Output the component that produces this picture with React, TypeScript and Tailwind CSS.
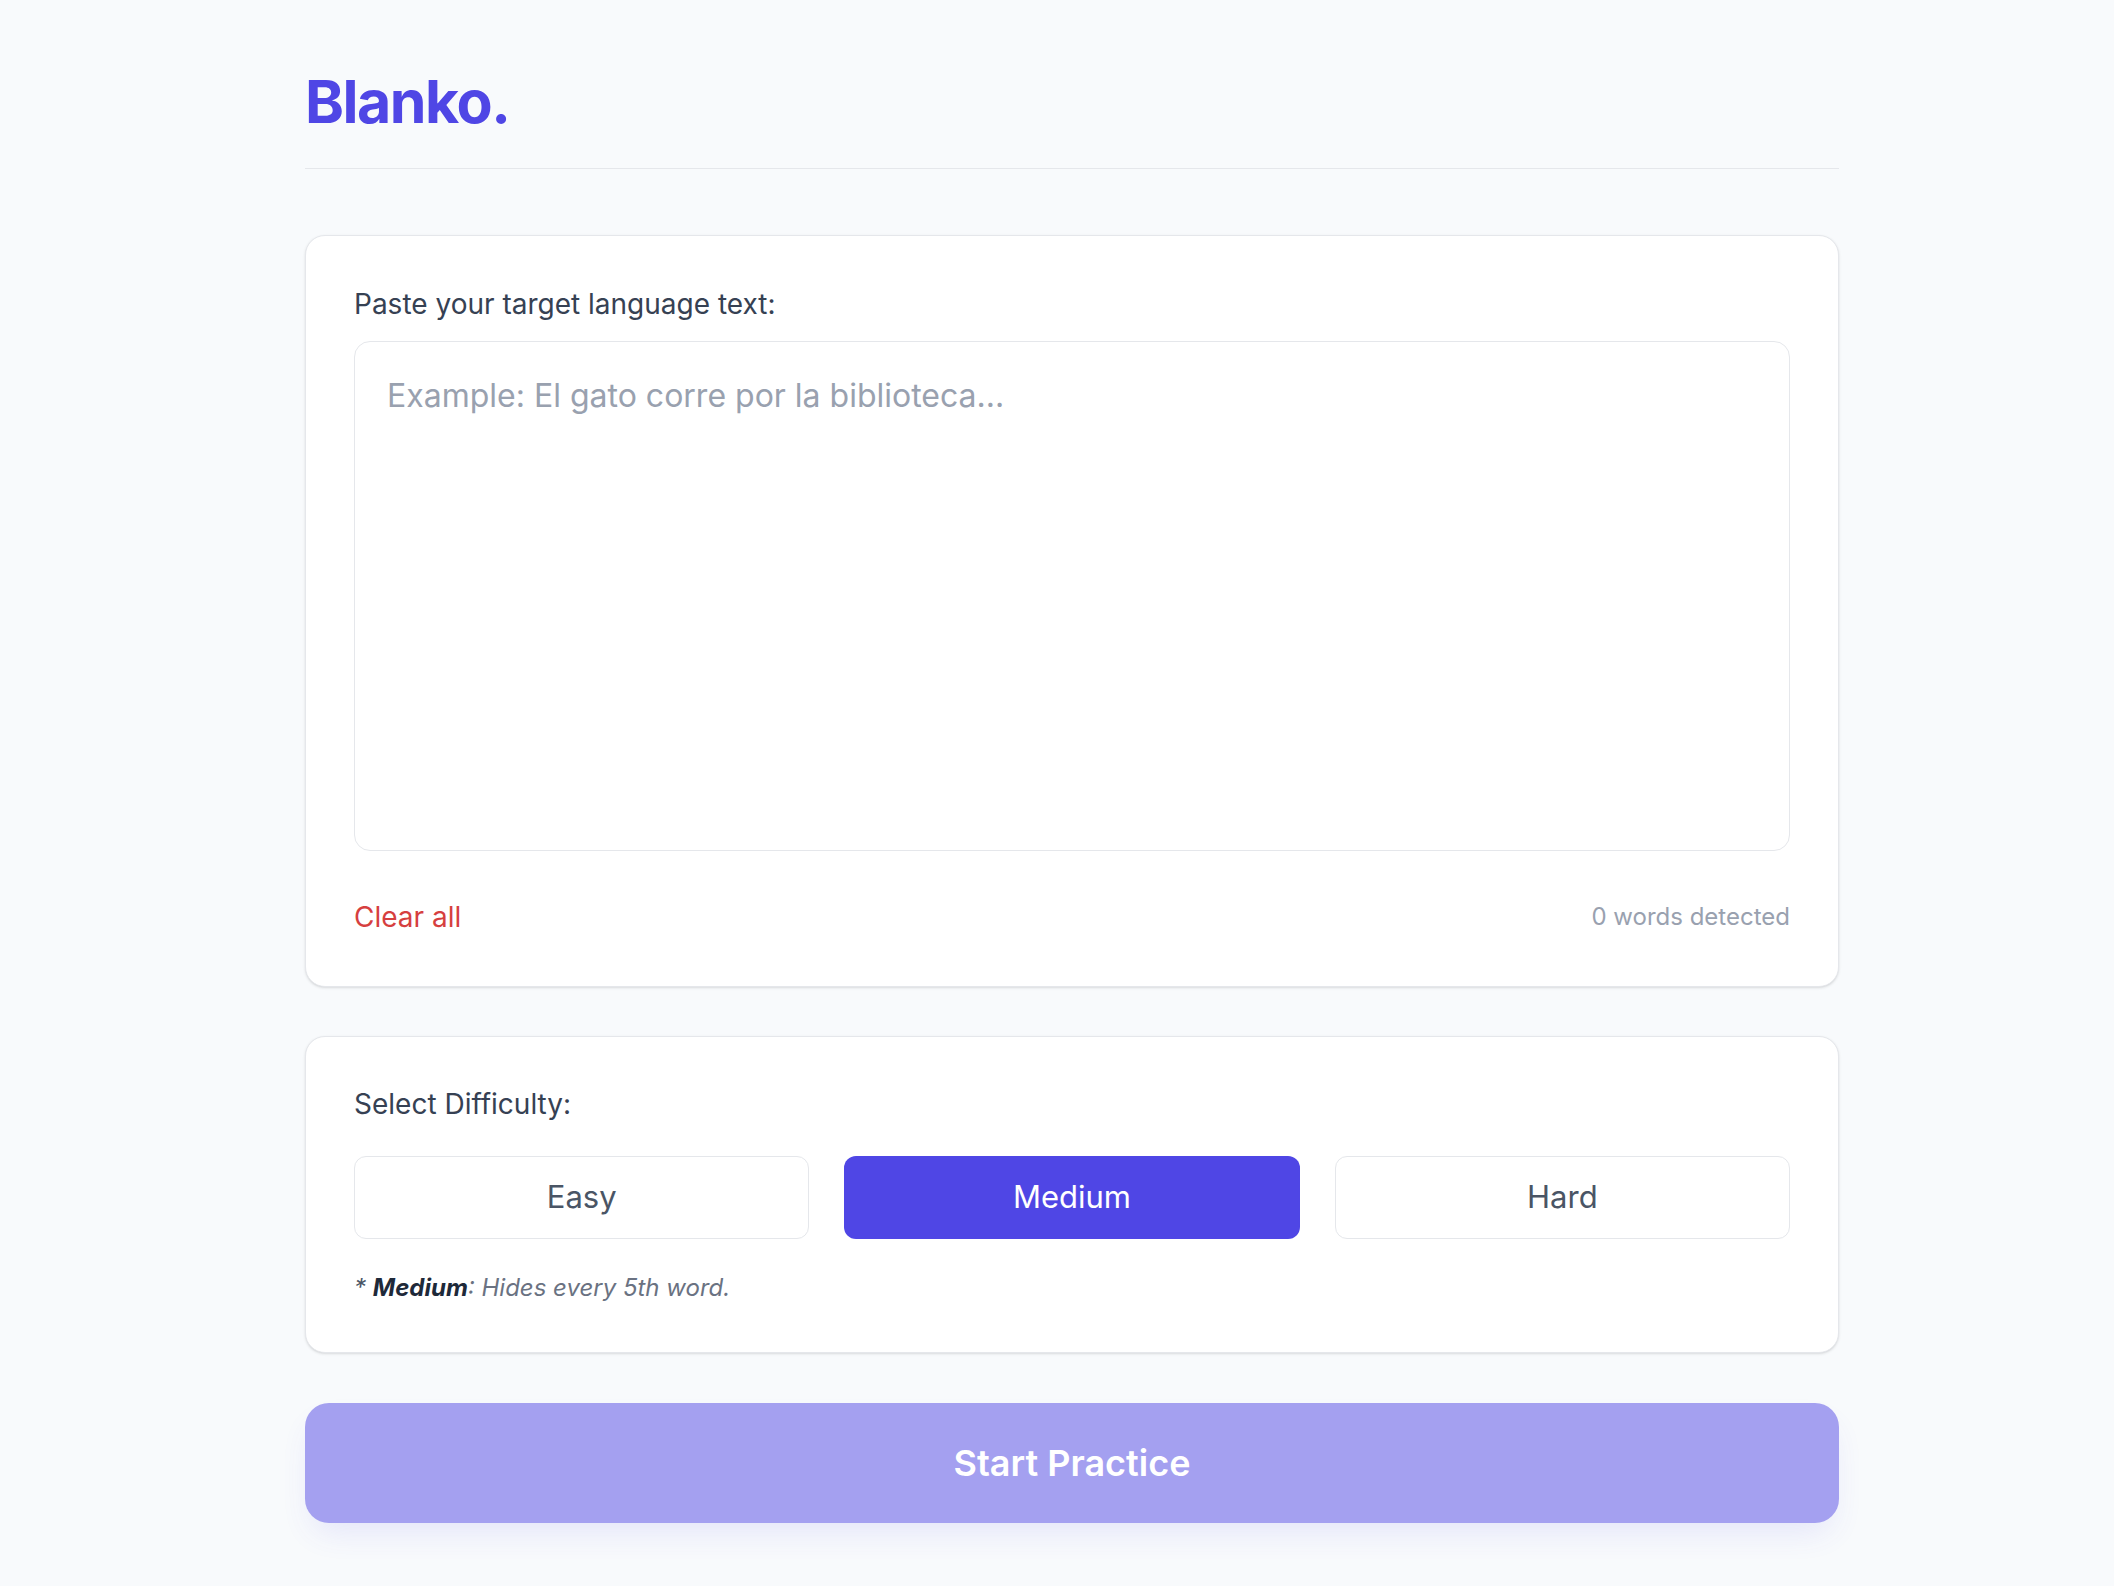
import React, { useState } from "react";

type Level = "Easy" | "Medium" | "Hard";

const levels: Level[] = ["Easy", "Medium", "Hard"];

const hints: Record<Level, string> = {
  Easy: "Hides every 8th word.",
  Medium: "Hides every 5th word.",
  Hard: "Hides every 3rd word.",
};

function countWords(text: string): number {
  const trimmed = text.trim();
  return trimmed ? trimmed.split(/\s+/).length : 0;
}

export default function App() {
  const [text, setText] = useState("");
  const [level, setLevel] = useState<Level>("Medium");
  const words = countWords(text);

  return (
    <div className="min-h-screen bg-[#f8fafc] font-['Inter','Noto_Sans',sans-serif] text-gray-700">
      <div className="flex justify-center pl-[30px]">
        <div className="w-[1534px] pb-[60px]">
          {/* Header */}
          <header className="pt-[72px] pb-[37px] border-b border-gray-200">
            <h1 className="text-[59px] leading-none font-bold tracking-tight text-[#4f46e5]">
              Blanko.
            </h1>
          </header>

          {/* Text input */}
          <section className="mt-[66px] rounded-[20px] border border-gray-200 bg-white p-12 shadow-sm">
            <label className="block pt-px text-[28px] leading-[39px] text-gray-700">
              Paste your target language text:
            </label>
            <textarea
              value={text}
              onChange={(e) => setText(e.target.value)}
              placeholder="Example: El gato corre por la biblioteca..."
              className="mt-[17px] block h-[510px] w-full resize-none rounded-2xl border border-gray-200 px-8 py-[34px] text-[32px] leading-[40px] text-gray-800 placeholder:text-gray-400 outline-none"
            />
            <div className="mt-[45px] flex items-center justify-between">
              <button
                onClick={() => setText("")}
                className="text-[28px] leading-[42px] text-[#d63f3f]"
              >
                Clear all
              </button>
              <span className="text-[24px] text-gray-400">
                {words} words detected
              </span>
            </div>
          </section>

          {/* Difficulty */}
          <section className="mt-[49px] rounded-[20px] border border-gray-200 bg-white p-12 shadow-sm">
            <p className="text-[28px] leading-[39px] text-gray-700">
              Select Difficulty:
            </p>
            <div className="mt-[32px] grid grid-cols-3 gap-[35px]">
              {levels.map((l) => (
                <button
                  key={l}
                  onClick={() => setLevel(l)}
                  className={`h-[83px] rounded-xl text-[31px] ${
                    l === level
                      ? "bg-[#4f46e5] text-white"
                      : "border border-gray-200 bg-white text-gray-600"
                  }`}
                >
                  {l}
                </button>
              ))}
            </div>
            <p className="mt-[32px] text-[24px] leading-[33px] italic text-gray-500">
              <span className="text-gray-600">* </span>
              <strong className="font-bold text-gray-800">{level}</strong>:{" "}
              {hints[level]}
            </p>
          </section>

          {/* Start */}
          <button
            disabled={words === 0}
            className="mt-[50px] h-[120px] w-full rounded-3xl bg-[#a4a0f0] text-[36px] font-semibold text-white shadow-[0_16px_32px_-8px_rgba(79,70,229,0.12)]"
          >
            Start Practice
          </button>
        </div>
      </div>
    </div>
  );
}
